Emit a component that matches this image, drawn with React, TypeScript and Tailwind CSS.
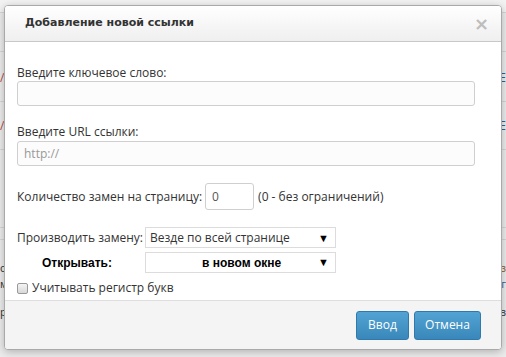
import React from 'react';

function Arrow() {
  return <span className="text-[11px] leading-none text-black">▼</span>;
}

export default function App() {
  return (
    <div className="relative w-[506px] h-[357px] overflow-hidden bg-[#ececec]" style={{ fontFamily: '"Open Sans", sans-serif' }}>
      {/* page behind the modal */}
      <div className="flex flex-col text-[12px] leading-[14px] text-[#2a6496]">
        <div className="h-[13px] border-b border-[#d6d6d6] bg-[#f3f3f3]" />
        <div className="h-[39px] border-b border-[#d6d6d6]" />
        <div className="h-[50px] border-b border-[#d6d6d6] flex items-center justify-between pt-[2px]">
          <span className="text-[#b94a48]">/</span>
          <span>E</span>
        </div>
        <div className="h-[48px] border-b border-[#d6d6d6] flex items-center justify-between">
          <span className="text-[#b94a48]">/</span>
          <span>E</span>
        </div>
        <div className="h-[78px] border-b border-[#d6d6d6]" />
        <div className="h-[12px] border-b border-[#d6d6d6]" />
        <div className="flex flex-col pt-[20px] text-[11px] leading-[16px]">
          <div className="flex justify-between">
            <span className="text-[#333]">с</span>
            <span className="text-[#8a5a2a]">з</span>
          </div>
          <div className="flex justify-between">
            <span className="text-[#333]">м</span>
            <span>г</span>
          </div>
          <div className="flex justify-between pt-[12px] text-[#333]">
            <span>р</span>
            <span>в</span>
          </div>
        </div>
      </div>

      {/* modal */}
      <div className="absolute left-[4px] top-[5px] w-[498px] h-[345px] flex flex-col rounded-[4px] border border-[#a9a9a9] bg-white shadow-[0_2px_8px_rgba(0,0,0,0.25)] overflow-hidden">
        <div className="h-[36px] shrink-0 flex items-center justify-between pl-[20px] pr-[12px] border-b border-[#c8c8c8] bg-gradient-to-b from-white to-[#efefef]">
          <span className="text-[11px] font-bold text-[#333]" style={{ fontFamily: '"DejaVu Sans", sans-serif' }}>
            Добавление новой ссылки
          </span>
          <span className="text-[18px] font-bold text-[#bdbdbd] leading-none" style={{ fontFamily: '"DejaVu Sans", sans-serif' }}>×</span>
        </div>

        <div className="flex flex-col pl-[12px] pt-[23px] text-[12px] text-[#333]">
          <div className="leading-[16px]">Введите ключевое слово:</div>
          <div className="h-[25px] w-[458px] rounded-[3px] border border-[#cfcfcf] bg-[#fcfcfc]" />

          <div className="mt-[18px] leading-[16px]">Введите URL ссылки:</div>
          <div className="mt-[1px] h-[25px] w-[458px] rounded-[3px] border border-[#cfcfcf] bg-[#fcfcfc] flex items-center pl-[6px] text-[#999]">
            http://
          </div>

          <div className="mt-[17px] flex items-center">
            <span>Количество замен на страницу:</span>
            <div className="ml-[3px] h-[27px] w-[49px] rounded-[3px] border border-[#cfcfcf] bg-white flex items-center pl-[6px] text-[#555]">0</div>
            <span className="ml-[4px]">(0 - без ограничений)</span>
          </div>

          <div className="mt-[17px] flex items-center">
            <span className="w-[128px]">Производить замену:</span>
            <div className="h-[21px] w-[191px] border border-[#dcdcdc] bg-white flex items-center justify-between pl-[4px] pr-[6px]">
              <span>Везде по всей странице</span>
              <Arrow />
            </div>
          </div>

          <div className="mt-[4px] flex items-center" style={{ fontFamily: '"Liberation Sans", Arial, sans-serif' }}>
            <span className="w-[128px] pl-[25px] text-[12px] font-bold text-black">Открывать:</span>
            <div className="h-[21px] w-[191px] border border-[#dcdcdc] bg-white flex items-center justify-between pl-[56px] pr-[6px]">
              <span className="font-bold text-black">в новом окне</span>
              <Arrow />
            </div>
          </div>

          <div className="mt-[6px] flex items-center">
            <span className="h-[11px] w-[11px] rounded-[2px] border border-[#999] bg-gradient-to-b from-[#f4f4f4] to-[#d8d8d8]" />
            <span className="ml-[4px]">Учитывать регистр букв</span>
          </div>
        </div>

        <div className="flex-1" />

        <div className="h-[49px] shrink-0 flex items-center justify-end gap-[5px] pr-[20px] border-t border-[#dedede] bg-[#f4f4f4]">
          <button className="h-[29px] w-[53px] rounded-[3px] border border-[#2f7aab] bg-gradient-to-b from-[#52a3d3] to-[#3a88bb] text-[12px] text-white">
            Ввод
          </button>
          <button className="h-[29px] w-[67px] rounded-[3px] border border-[#2f7aab] bg-gradient-to-b from-[#52a3d3] to-[#3a88bb] text-[12px] text-white">
            Отмена
          </button>
        </div>
      </div>
    </div>
  );
}
